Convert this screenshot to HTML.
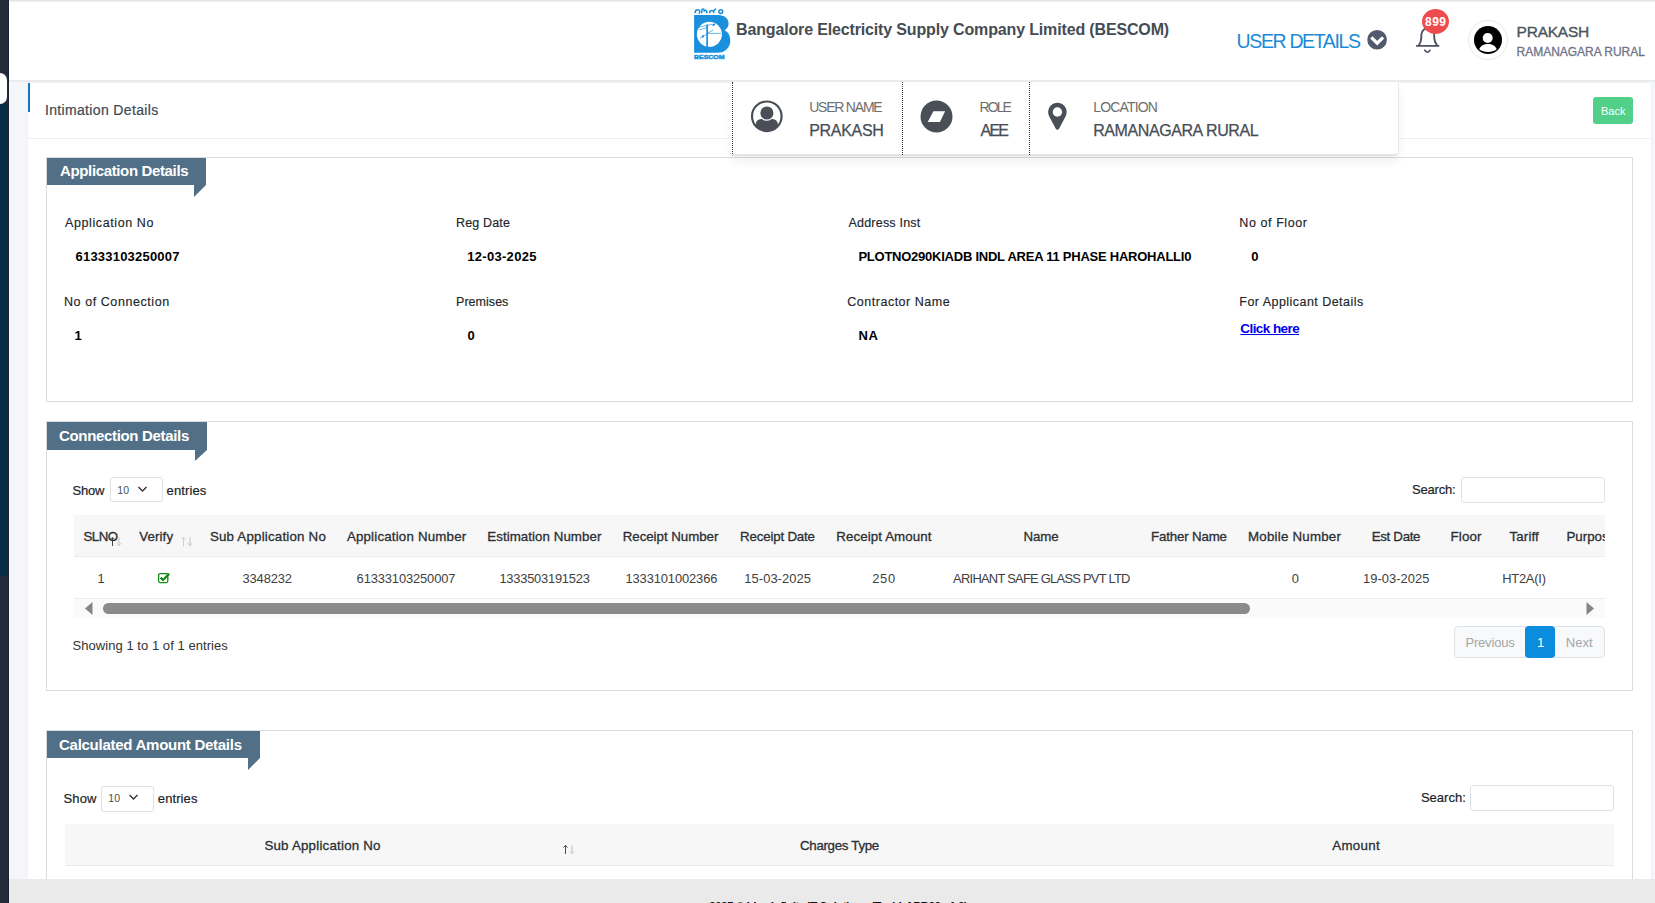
<!DOCTYPE html>
<html><head><meta charset="utf-8"><title>Intimation Details</title>
<style>
html,body{margin:0;padding:0;}
body{width:1655px;height:903px;overflow:hidden;position:relative;background:#f5f6f9;font-family:"Liberation Sans",sans-serif;}
.a{position:absolute;box-sizing:border-box;}
.t{position:absolute;white-space:nowrap;line-height:1;font-family:"Liberation Sans",sans-serif;}
</style></head><body>
<!-- sidebar -->
<div class="a" style="left:0;top:0;width:9px;height:104px;background:#232a3a;"></div>
<div class="a" style="left:0;top:104px;width:9px;height:472px;background:#062c46;"></div>
<div class="a" style="left:0;top:576px;width:9px;height:327px;background:#232b3b;"></div>
<div class="a" style="left:8px;top:0;width:1px;height:903px;background:#1a2230;"></div><div class="a" style="left:9px;top:82px;width:1px;height:797px;background:#fbfbfc;"></div>
<div class="a" style="left:-10px;top:73px;width:17px;height:31px;background:#ffffff;border-radius:7px;"></div>
<!-- header -->
<div class="a" style="left:9px;top:0;width:1646px;height:80px;background:#ffffff;"></div>
<div class="a" style="left:9px;top:0;width:1646px;height:1px;background:#e4e5e7;"></div><div class="a" style="left:9px;top:1px;width:1646px;height:1px;background:#f3f3f4;"></div>
<div class="a" style="left:9px;top:80px;width:1646px;height:2px;background:#e9ebee;"></div>
<!-- card -->
<div class="a" style="left:28px;top:83px;width:1623px;height:830px;background:#ffffff;border-radius:3px;box-shadow:0 0 1px rgba(0,0,0,0.12);"></div>
<div class="a" style="left:28px;top:83px;width:2px;height:29px;background:#1677be;"></div>
<div class="a" style="left:28px;top:138px;width:1623px;height:1px;background:#eef0f2;"></div>
<div class="a" style="left:1593px;top:97px;width:40px;height:27px;background:#52cf89;border-radius:3px;"></div>
<!-- sections -->
<div class="a" style="left:46px;top:157px;width:1587px;height:245px;border:1px solid #dcdcdc;"></div>
<div class="a" style="left:46px;top:421px;width:1587px;height:270px;border:1px solid #dcdcdc;"></div>
<div class="a" style="left:46px;top:730px;width:1587px;height:200px;border:1px solid #dcdcdc;"></div>
<!-- tabs -->
<div class="a" style="left:47px;top:158px;width:159px;height:27px;background:#516f86;"></div>
<svg class="a" style="left:194px;top:185px" width="12" height="12"><polygon points="0,0 12,0 0,12" fill="#516f86"/></svg>
<div class="a" style="left:47px;top:422px;width:160px;height:28px;background:#516f86;"></div>
<svg class="a" style="left:195px;top:450px" width="12" height="11"><polygon points="0,0 12,0 0,11" fill="#516f86"/></svg>
<div class="a" style="left:47px;top:731px;width:213px;height:27px;background:#516f86;"></div>
<svg class="a" style="left:248px;top:758px" width="12" height="12"><polygon points="0,0 12,0 0,12" fill="#516f86"/></svg>
<!-- connection table -->
<div class="a" style="left:109.5px;top:476.8px;width:53px;height:25.5px;border:1px solid #dee2e6;border-radius:3px;background:#fff;"></div>
<svg class="a" style="left:137px;top:485px" width="12" height="9"><polyline points="1.5,2 5.5,6 9.5,2" fill="none" stroke="#333" stroke-width="1.4"/></svg>
<div class="a" style="left:1461px;top:477px;width:144px;height:26px;border:1px solid #dee2e6;border-radius:3px;background:#fff;"></div>
<div class="a" style="left:74px;top:515px;width:1531px;height:42px;background:#f7f7f7;border-bottom:1px solid #ebebeb;"></div>
<div class="a" style="left:74px;top:598px;width:1531px;height:1px;background:#eeeeee;"></div>
<div class="a" style="left:74px;top:599px;width:1531px;height:19px;background:#fafafa;"></div>
<svg class="a" style="left:84px;top:601px" width="10" height="15"><polygon points="8.5,1 1,7.5 8.5,14" fill="#858585"/></svg>
<svg class="a" style="left:1585px;top:601px" width="10" height="15"><polygon points="1.5,1 9,7.5 1.5,14" fill="#858585"/></svg>
<div class="a" style="left:103px;top:603px;width:1147px;height:11px;background:#8a8a8a;border-radius:6px;"></div>
<!-- sort arrows -->
<svg class="a" style="left:108px;top:536px" width="16" height="11">
 <path d="M4.5 10V1.5M2.5 3.5L4.5 1.3 6.5 3.5" fill="none" stroke="#4d4d4d" stroke-width="1"/>
 <path d="M11 1v8.5M9 7.3L11 9.6 13 7.3" fill="none" stroke="#c4c4c4" stroke-width="1"/>
</svg>
<svg class="a" style="left:179px;top:536px" width="16" height="11">
 <path d="M4.5 10V1.5M2.5 3.5L4.5 1.3 6.5 3.5" fill="none" stroke="#cfcfcf" stroke-width="1"/>
 <path d="M11 1v8.5M9 7.3L11 9.6 13 7.3" fill="none" stroke="#c4c4c4" stroke-width="1"/>
</svg>
<!-- checkbox -->
<svg class="a" style="left:157px;top:572px" width="14" height="12">
 <rect x="1.6" y="1.6" width="9.2" height="9" rx="1.5" fill="none" stroke="#118a11" stroke-width="1.3"/>
 <path d="M3.6 5.6L6 8 12.2 1.8" fill="none" stroke="#118a11" stroke-width="2.2"/>
</svg>
<!-- pagination -->
<div class="a" style="left:1454px;top:626px;width:72px;height:32px;background:#f8f9fa;border:1px solid #dee2e6;border-radius:4px 0 0 4px;"></div>
<div class="a" style="left:1554px;top:626px;width:51px;height:32px;background:#f8f9fa;border:1px solid #dee2e6;border-radius:0 4px 4px 0;"></div>
<div class="a" style="left:1525px;top:626px;width:30px;height:32px;background:#0b8cdc;border-radius:4px;"></div>
<!-- calc table -->
<div class="a" style="left:100.5px;top:785.5px;width:53px;height:26px;border:1px solid #dee2e6;border-radius:3px;background:#fff;"></div>
<svg class="a" style="left:128px;top:793px" width="12" height="9"><polyline points="1.5,2 5.5,6 9.5,2" fill="none" stroke="#333" stroke-width="1.4"/></svg>
<div class="a" style="left:1470px;top:785px;width:144px;height:26px;border:1px solid #dee2e6;border-radius:3px;background:#fff;"></div>
<div class="a" style="left:65px;top:824px;width:1549px;height:42px;background:#f7f7f7;border-bottom:1px solid #ebebeb;"></div>
<svg class="a" style="left:561px;top:844px" width="16" height="11">
 <path d="M4.5 10V1.5M2.5 3.5L4.5 1.3 6.5 3.5" fill="none" stroke="#4d4d4d" stroke-width="1"/>
 <path d="M11 1v8.5M9 7.3L11 9.6 13 7.3" fill="none" stroke="#c4c4c4" stroke-width="1"/>
</svg>
<!-- dropdown overlay -->
<div class="a" style="left:732px;top:82px;width:667px;height:74px;background:#fff;border-left:1px dotted #333;border-right:1px solid #e8e9ec;border-bottom:2px solid #e3e4e6;border-radius:0 3px 5px 0;box-shadow:0 6px 10px rgba(0,0,0,0.06);"></div>
<div class="a" style="left:902px;top:82px;width:1px;height:73px;border-left:1px dotted #333;"></div>
<div class="a" style="left:1029px;top:82px;width:1px;height:73px;border-left:1px dotted #333;"></div>
<!-- user icon -->
<svg class="a" style="left:750px;top:100px" width="34" height="34" viewBox="0 0 34 34">
 <defs><clipPath id="cc"><circle cx="16.8" cy="16.3" r="14.5"/></clipPath></defs>
 <circle cx="16.8" cy="16.3" r="14.8" fill="none" stroke="#4a4f57" stroke-width="2.2"/>
 <g clip-path="url(#cc)"><rect x="5.7" y="19" width="22.2" height="16" rx="5.5" fill="#4a4f57"/></g>
 <circle cx="16.9" cy="13" r="7.2" fill="#4a4f57" stroke="#fff" stroke-width="1.3"/>
</svg>
<!-- role icon -->
<svg class="a" style="left:920px;top:100px" width="34" height="34" viewBox="0 0 34 34">
 <circle cx="16.5" cy="16.5" r="16" fill="#4a4f57"/>
 <polygon points="13.4,11.2 25.1,11.2 19.9,21.9 7.7,21.9" fill="#ffffff"/>
</svg>
<!-- pin icon -->
<svg class="a" style="left:1047px;top:102px" width="21" height="30" viewBox="0 0 21 30">
 <path d="M10.4 0.75C15.5 0.75 19.65 4.9 19.65 10C19.65 11.8 19.1 13.3 18.3 14.9L12 26.8C11.3 28.1 9.5 28.1 8.8 26.8L2.5 14.9C1.7 13.3 1.15 11.8 1.15 10C1.15 4.9 5.3 0.75 10.4 0.75Z" fill="#4a4f57"/>
 <circle cx="10.4" cy="10" r="4.7" fill="#fff"/>
</svg>
<!-- logo -->
<svg class="a" style="left:690px;top:5px" width="45" height="57" viewBox="0 0 45 57">
 <g fill="none" stroke="#1a90dc" stroke-width="1.5">
  <path d="M5 8.2c0-2 1-3.5 2.6-3.5 1.4 0 2.2 1 2.2 2.2 0 1-.6 1.4-1.2 1.4"/>
  <path d="M11.8 8.2V5.2c0-.8.5-1.2 1.2-1.2s1.2.4 1.2 1.2v1.5c0-.9.6-1.5 1.3-1.5.8 0 1.3.6 1.3 1.6V8.2"/>
  <path d="M19.5 8.3c0-1.6.8-2.9 2.2-2.9 1.2 0 2 .9 2 2.2V8.3M23.7 6.2c.4-1.4 1.3-2.2 2.4-2.2"/>
  <circle cx="30.8" cy="6.6" r="1.9"/>
 </g>
 <path d="M4.1 10.1H28C34.5 10.1 38.6 13.6 38.6 18.6C38.6 21.6 37 23.8 34.4 25.3C38 26.8 40.3 30.5 40.3 35.4C40.3 42.5 35.2 47.7 27.2 47.7H4.1Z" fill="#1a90dc"/>
 <circle cx="19.4" cy="29.3" r="12.5" fill="#ffffff"/>
 <rect x="16.3" y="19.5" width="1.7" height="23" fill="#1a90dc"/>
 <path d="M18 28.4H31M9 25l8-2.3M8.5 22.2l14-3M10 33.5l13-8.6" stroke="#1a90dc" stroke-width="0.8" fill="none" opacity="0.8"/>
 <path d="M22.5 20.5l2.5-1.5M12 32l2-1.5" stroke="#1a90dc" stroke-width="1.6" fill="none"/>
 <text x="4" y="53.7" font-family="Liberation Sans" font-size="5.9" font-weight="700" fill="#1a90dc" stroke="#1a90dc" stroke-width="0.45" textLength="30.6" lengthAdjust="spacingAndGlyphs">BESCOM</text>
</svg>
<!-- chevron circle -->
<svg class="a" style="left:1367px;top:30px" width="21" height="21" viewBox="0 0 21 21">
 <circle cx="10.1" cy="9.8" r="9.8" fill="#535a6e"/>
 <polyline points="4.3,7.3 10.2,13.2 16.1,7.3" fill="none" stroke="#fff" stroke-width="3.2"/>
</svg>
<!-- bell -->
<svg class="a" style="left:1405px;top:5px" width="50" height="55" viewBox="0 0 50 55">
 <path d="M11.8 40.9H33.5" stroke="#4c5163" stroke-width="1.9" stroke-linecap="round"/>
 <path d="M13.5 40.8C15.3 38.5 16.3 36 16.3 32.5V30.5C16.3 26 19.3 23 23 23C26.7 23 29.2 26 29.2 30.5V32.5C29.2 36 30.5 38.5 32.3 40.8" fill="none" stroke="#4c5163" stroke-width="1.9" stroke-linejoin="round"/>
 <path d="M19.8 45.2C20.8 46.6 21.6 47.2 22.4 47.2C23.2 47.2 24 46.6 25 45.2" fill="none" stroke="#4c5163" stroke-width="1.6" stroke-linecap="round"/>
</svg>
<div class="a" style="left:1422px;top:9px;width:27px;height:25px;background:#ef4b4d;border-radius:50%;"></div>
<!-- avatar -->
<div class="a" style="left:1468px;top:20px;width:40px;height:40px;border:1px solid #e6e8ec;border-radius:50%;background:#fff;"></div>
<svg class="a" style="left:1473px;top:26px" width="30" height="29" viewBox="0 0 30 29">
 <circle cx="15" cy="14" r="14" fill="#000"/>
 <circle cx="14.7" cy="12" r="5" fill="#fff"/>
 <path d="M6.2 23.3C7.5 20 11 18.1 15 18.1C19 18.1 22.5 20 23.7 23.3C21.5 25.2 18.5 26 15 26C11.5 26 8.5 25.2 6.2 23.3Z" fill="#fff"/>
</svg>
<!-- footer -->
<div class="a" style="left:9px;top:879px;width:1646px;height:24px;background:#eaeaea;"></div>
<div class="t" style="left:736.0px;top:22.0px;font-size:16px;font-weight:700;color:#454c54;letter-spacing:-0.15px;">Bangalore Electricity Supply Company Limited (BESCOM)</div>
<div class="t" style="left:1236.6px;top:32.0px;font-size:19.5px;font-weight:400;color:#1b8ad6;letter-spacing:-1.36px;">USER DETAILS</div>
<div class="t" style="left:1516.6px;top:23.9px;font-size:15.5px;font-weight:400;color:#4b545c;letter-spacing:-0.25px;-webkit-text-stroke:0.35px #4b545c;">PRAKASH</div>
<div class="t" style="left:1516.6px;top:45.8px;font-size:12px;font-weight:400;color:#6f7489;letter-spacing:-0.03px;-webkit-text-stroke:0.3px #6f7489;">RAMANAGARA RURAL</div>
<div class="t" style="left:1425.0px;top:15.7px;font-size:12px;font-weight:700;color:#ffffff;letter-spacing:0.50px;">899</div>
<div class="t" style="left:809.2px;top:99.8px;font-size:14px;font-weight:400;color:#6e6e6e;letter-spacing:-1.22px;">USER NAME</div>
<div class="t" style="left:809.2px;top:122.6px;font-size:16px;font-weight:400;color:#474d55;letter-spacing:-0.30px;-webkit-text-stroke:0.25px #474d55;">PRAKASH</div>
<div class="t" style="left:979.6px;top:99.8px;font-size:14px;font-weight:400;color:#6e6e6e;letter-spacing:-1.93px;">ROLE</div>
<div class="t" style="left:980.6px;top:122.6px;font-size:16px;font-weight:400;color:#474d55;letter-spacing:-1.85px;-webkit-text-stroke:0.25px #474d55;">AEE</div>
<div class="t" style="left:1093.2px;top:99.8px;font-size:14px;font-weight:400;color:#6e6e6e;letter-spacing:-0.83px;">LOCATION</div>
<div class="t" style="left:1093.2px;top:122.6px;font-size:16px;font-weight:400;color:#474d55;letter-spacing:-0.41px;-webkit-text-stroke:0.25px #474d55;">RAMANAGARA RURAL</div>
<div class="t" style="left:44.9px;top:103.1px;font-size:14px;font-weight:400;color:#3e4852;letter-spacing:0.35px;-webkit-text-stroke:0.2px #3e4852;">Intimation Details</div>
<div class="t" style="left:1601.0px;top:105.7px;font-size:11px;font-weight:400;color:#ffffff;">Back</div>
<div class="t" style="left:60.0px;top:163.3px;font-size:15px;font-weight:700;color:#ffffff;letter-spacing:-0.36px;">Application Details</div>
<div class="t" style="left:59.0px;top:427.7px;font-size:15px;font-weight:700;color:#ffffff;letter-spacing:-0.33px;">Connection Details</div>
<div class="t" style="left:59.0px;top:736.8px;font-size:15px;font-weight:700;color:#ffffff;letter-spacing:-0.27px;">Calculated Amount Details</div>
<div class="t" style="left:65.0px;top:216.7px;font-size:12.5px;font-weight:400;color:#212529;letter-spacing:0.60px;-webkit-text-stroke:0.15px #212529;">Application No</div>
<div class="t" style="left:456.0px;top:216.7px;font-size:12.5px;font-weight:400;color:#212529;letter-spacing:0.16px;-webkit-text-stroke:0.15px #212529;">Reg Date</div>
<div class="t" style="left:848.5px;top:216.7px;font-size:12.5px;font-weight:400;color:#212529;letter-spacing:0.21px;-webkit-text-stroke:0.15px #212529;">Address Inst</div>
<div class="t" style="left:1239.3px;top:216.7px;font-size:12.5px;font-weight:400;color:#212529;letter-spacing:0.58px;-webkit-text-stroke:0.15px #212529;">No of Floor</div>
<div class="t" style="left:64.0px;top:295.8px;font-size:12.5px;font-weight:400;color:#212529;letter-spacing:0.57px;-webkit-text-stroke:0.15px #212529;">No of Connection</div>
<div class="t" style="left:456.0px;top:295.8px;font-size:12.5px;font-weight:400;color:#212529;letter-spacing:0.04px;-webkit-text-stroke:0.15px #212529;">Premises</div>
<div class="t" style="left:847.3px;top:295.8px;font-size:12.5px;font-weight:400;color:#212529;letter-spacing:0.51px;-webkit-text-stroke:0.15px #212529;">Contractor Name</div>
<div class="t" style="left:1239.3px;top:295.8px;font-size:12.5px;font-weight:400;color:#212529;letter-spacing:0.46px;-webkit-text-stroke:0.15px #212529;">For Applicant Details</div>
<div class="t" style="left:75.5px;top:249.7px;font-size:13px;font-weight:700;color:#000000;letter-spacing:0.21px;">61333103250007</div>
<div class="t" style="left:467.3px;top:249.7px;font-size:13px;font-weight:700;color:#000000;letter-spacing:0.29px;">12-03-2025</div>
<div class="t" style="left:858.4px;top:249.7px;font-size:13px;font-weight:700;color:#000000;letter-spacing:-0.24px;">PLOTNO290KIADB INDL AREA 11 PHASE HAROHALLI0</div>
<div class="t" style="left:1251.2px;top:249.7px;font-size:13px;font-weight:700;color:#000000;">0</div>
<div class="t" style="left:74.5px;top:328.5px;font-size:13px;font-weight:700;color:#000000;">1</div>
<div class="t" style="left:467.5px;top:328.5px;font-size:13px;font-weight:700;color:#000000;">0</div>
<div class="t" style="left:858.4px;top:328.5px;font-size:13px;font-weight:700;color:#000000;letter-spacing:0.80px;">NA</div>
<div class="t" style="left:1240.3px;top:321.9px;font-size:13.5px;font-weight:700;color:#0000ee;letter-spacing:-0.57px;text-decoration:underline;">Click here</div>
<div class="t" style="left:72.6px;top:483.7px;font-size:13px;font-weight:400;color:#212529;letter-spacing:-0.27px;-webkit-text-stroke:0.2px #212529;">Show</div>
<div class="t" style="left:117.2px;top:485.0px;font-size:10.5px;font-weight:400;color:#495057;letter-spacing:0.30px;">10</div>
<div class="t" style="left:166.6px;top:483.7px;font-size:13px;font-weight:400;color:#212529;letter-spacing:0.10px;-webkit-text-stroke:0.2px #212529;">entries</div>
<div class="t" style="left:1411.9px;top:483.2px;font-size:13px;font-weight:400;color:#212529;letter-spacing:-0.17px;-webkit-text-stroke:0.2px #212529;">Search:</div>
<div class="t" style="left:83.4px;top:530.0px;font-size:13.3px;font-weight:400;color:#2b2f33;letter-spacing:-0.47px;-webkit-text-stroke:0.3px #2b2f33;">SLNO</div>
<div class="t" style="left:139.3px;top:530.0px;font-size:13.3px;font-weight:400;color:#2b2f33;letter-spacing:0.10px;-webkit-text-stroke:0.3px #2b2f33;">Verify</div>
<div class="t" style="left:209.9px;top:530.0px;font-size:13.3px;font-weight:400;color:#2b2f33;letter-spacing:0.21px;-webkit-text-stroke:0.3px #2b2f33;">Sub Application No</div>
<div class="t" style="left:346.9px;top:530.0px;font-size:13.3px;font-weight:400;color:#2b2f33;letter-spacing:0.19px;-webkit-text-stroke:0.3px #2b2f33;">Application Number</div>
<div class="t" style="left:487.3px;top:530.0px;font-size:13.3px;font-weight:400;color:#2b2f33;letter-spacing:0.06px;-webkit-text-stroke:0.3px #2b2f33;">Estimation Number</div>
<div class="t" style="left:622.7px;top:530.0px;font-size:13.3px;font-weight:400;color:#2b2f33;letter-spacing:-0.03px;-webkit-text-stroke:0.3px #2b2f33;">Receipt Number</div>
<div class="t" style="left:740.1px;top:530.0px;font-size:13.3px;font-weight:400;color:#2b2f33;letter-spacing:-0.18px;-webkit-text-stroke:0.3px #2b2f33;">Receipt Date</div>
<div class="t" style="left:836.3px;top:530.0px;font-size:13.3px;font-weight:400;color:#2b2f33;letter-spacing:0.10px;-webkit-text-stroke:0.3px #2b2f33;">Receipt Amount</div>
<div class="t" style="left:1023.6px;top:530.0px;font-size:13.3px;font-weight:400;color:#2b2f33;letter-spacing:-0.13px;-webkit-text-stroke:0.3px #2b2f33;">Name</div>
<div class="t" style="left:1151.0px;top:530.0px;font-size:13.3px;font-weight:400;color:#2b2f33;letter-spacing:-0.16px;-webkit-text-stroke:0.3px #2b2f33;">Father Name</div>
<div class="t" style="left:1248.0px;top:530.0px;font-size:13.3px;font-weight:400;color:#2b2f33;letter-spacing:0.23px;-webkit-text-stroke:0.3px #2b2f33;">Mobile Number</div>
<div class="t" style="left:1371.7px;top:530.0px;font-size:13.3px;font-weight:400;color:#2b2f33;letter-spacing:-0.31px;-webkit-text-stroke:0.3px #2b2f33;">Est Date</div>
<div class="t" style="left:1450.5px;top:530.0px;font-size:13.3px;font-weight:400;color:#2b2f33;letter-spacing:0.18px;-webkit-text-stroke:0.3px #2b2f33;">Floor</div>
<div class="t" style="left:1509.5px;top:530.0px;font-size:13.3px;font-weight:400;color:#2b2f33;letter-spacing:0.14px;-webkit-text-stroke:0.3px #2b2f33;">Tariff</div>
<div class="t" style="left:1566.5px;top:530.0px;font-size:13.3px;font-weight:400;color:#2b2f33;-webkit-text-stroke:0.3px #2b2f33;">Purpose</div>
<div class="t" style="left:97.5px;top:572.9px;font-size:12.9px;font-weight:400;color:#404040;">1</div>
<div class="t" style="left:242.5px;top:572.9px;font-size:12.9px;font-weight:400;color:#404040;letter-spacing:-0.12px;">3348232</div>
<div class="t" style="left:356.6px;top:572.9px;font-size:12.9px;font-weight:400;color:#404040;letter-spacing:-0.12px;">61333103250007</div>
<div class="t" style="left:499.4px;top:572.9px;font-size:12.9px;font-weight:400;color:#404040;letter-spacing:-0.23px;">1333503191523</div>
<div class="t" style="left:625.5px;top:572.9px;font-size:12.9px;font-weight:400;color:#404040;letter-spacing:-0.11px;">1333101002366</div>
<div class="t" style="left:744.3px;top:572.9px;font-size:12.9px;font-weight:400;color:#404040;letter-spacing:0.07px;">15-03-2025</div>
<div class="t" style="left:872.3px;top:572.9px;font-size:12.9px;font-weight:400;color:#404040;letter-spacing:0.65px;">250</div>
<div class="t" style="left:953.1px;top:572.9px;font-size:12.9px;font-weight:400;color:#404040;letter-spacing:-0.73px;">ARIHANT SAFE GLASS PVT LTD</div>
<div class="t" style="left:1291.8px;top:572.9px;font-size:12.9px;font-weight:400;color:#404040;">0</div>
<div class="t" style="left:1363.1px;top:572.9px;font-size:12.9px;font-weight:400;color:#404040;letter-spacing:0.03px;">19-03-2025</div>
<div class="t" style="left:1502.2px;top:572.9px;font-size:12.9px;font-weight:400;color:#404040;letter-spacing:-0.23px;">HT2A(I)</div>
<div class="t" style="left:72.5px;top:639.0px;font-size:13px;font-weight:400;color:#333333;letter-spacing:0.05px;">Showing 1 to 1 of 1 entries</div>
<div class="t" style="left:1465.4px;top:635.9px;font-size:13px;font-weight:400;color:#a3a7ab;letter-spacing:-0.17px;">Previous</div>
<div class="t" style="left:1536.9px;top:635.9px;font-size:13px;font-weight:400;color:#ffffff;">1</div>
<div class="t" style="left:1565.7px;top:635.9px;font-size:13px;font-weight:400;color:#a3a7ab;letter-spacing:0.10px;">Next</div>
<div class="t" style="left:63.5px;top:791.9px;font-size:13px;font-weight:400;color:#212529;letter-spacing:0.13px;-webkit-text-stroke:0.2px #212529;">Show</div>
<div class="t" style="left:108.2px;top:793.2px;font-size:10.5px;font-weight:400;color:#495057;letter-spacing:0.30px;">10</div>
<div class="t" style="left:157.8px;top:791.9px;font-size:13px;font-weight:400;color:#212529;letter-spacing:0.10px;-webkit-text-stroke:0.2px #212529;">entries</div>
<div class="t" style="left:1420.9px;top:791.4px;font-size:13px;font-weight:400;color:#212529;letter-spacing:0.02px;-webkit-text-stroke:0.2px #212529;">Search:</div>
<div class="t" style="left:264.4px;top:839.0px;font-size:13.3px;font-weight:400;color:#2b2f33;letter-spacing:0.22px;-webkit-text-stroke:0.3px #2b2f33;">Sub Application No</div>
<div class="t" style="left:800.0px;top:839.0px;font-size:13.3px;font-weight:400;color:#2b2f33;letter-spacing:-0.30px;-webkit-text-stroke:0.3px #2b2f33;">Charges Type</div>
<div class="t" style="left:1332.3px;top:839.0px;font-size:13.3px;font-weight:400;color:#2b2f33;letter-spacing:0.30px;-webkit-text-stroke:0.3px #2b2f33;">Amount</div>
<div class="t" style="left:709.0px;top:901.0px;font-size:12px;font-weight:700;color:#111111;letter-spacing:-0.66px;">2025 © Idea Infinity IT Solutions (TechLAPB99 v1.0)</div>
<!-- clip purpose -->
<div class="a" style="left:1605px;top:515px;width:27px;height:42px;background:#fff;"></div>
</body></html>
